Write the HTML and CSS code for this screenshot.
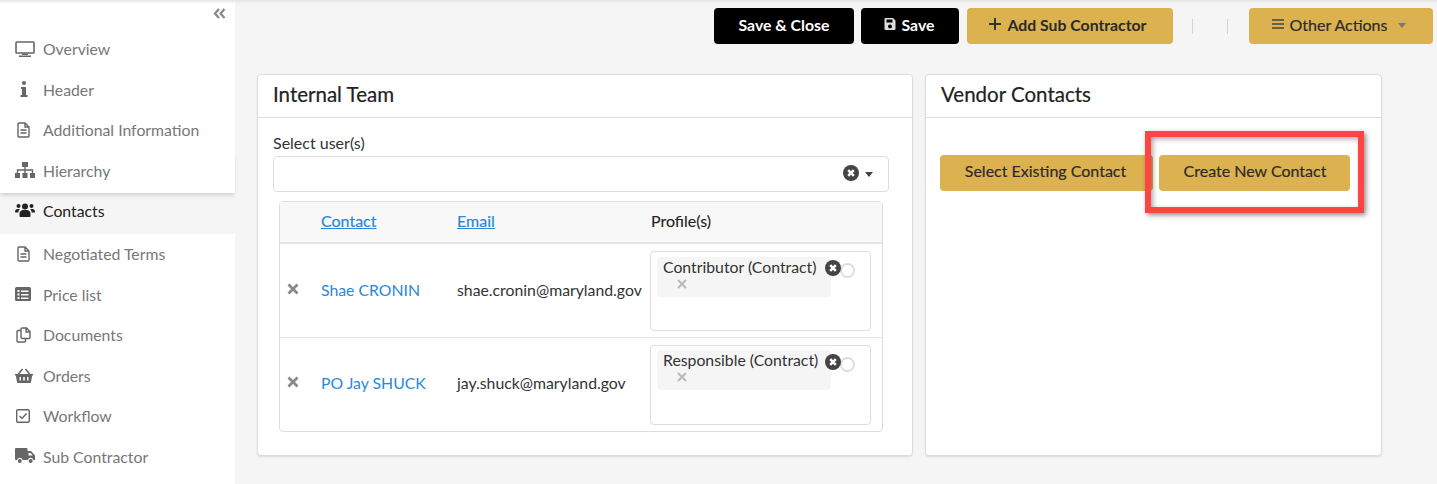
FILE: index.html
```html
<!DOCTYPE html>
<html lang="en">
<head>
<meta charset="utf-8">
<title>Contacts</title>
<link rel="stylesheet" href="styles.css">
</head>
<body>
<div class="page">
  <aside class="sidebar">
    <div class="collapse"><svg width="13" height="11" viewBox="0 0 13 11"><path d="M6 1 2 5.500 6 10M11.500 1 7.500 5.500 11.500 10" fill="none" stroke="#888" stroke-width="2.200"/></svg></div>
    <nav class="nav">
      <a class="item"><span class="ic"><svg width="20" height="16" viewBox="0 0 20 16"><path d="M1.800 1h16.400a.8.800 0 0 1 .8.800v9.400a.8.800 0 0 1-.8.800H1.800a.8.800 0 0 1-.8-.8V1.800a.8.800 0 0 1 .8-.8Z" fill="none" stroke="#666" stroke-width="1.600"/><path d="M7 12.500h6v1.500H7zM4 14.500h12V16H4z" fill="#666"/></svg></span>Overview</a>
      <a class="item"><span class="ic"><svg width="8" height="16" viewBox="0 0 8 16"><circle cx="4" cy="2" r="2" fill="#666"/><path d="M1 6h5v8h1.500v2H.5v-2H2V8H1z" fill="#666"/></svg></span>Header</a>
      <a class="item"><span class="ic"><svg width="13" height="16" viewBox="0 0 13 16"><path d="M2 1h6l4 4v9a1 1 0 0 1-1 1H2a1 1 0 0 1-1-1V2a1 1 0 0 1 1-1ZM8 1v4h4M3.500 8h6M3.500 11h6" fill="none" stroke="#666" stroke-width="1.400"/></svg></span>Additional Information</a>
      <a class="item"><span class="ic"><svg width="20" height="16" viewBox="0 0 20 16"><path d="M7 0h6v5H7zM0 11h5v5H0zM7.500 11h5v5h-5zM15 11h5v5h-5z" fill="#666"/><path d="M10 5v6M2.500 11V8h15v3" fill="none" stroke="#666" stroke-width="1.400"/></svg></span>Hierarchy</a>
      <a class="item active"><span class="ic"><svg width="20" height="14" viewBox="0 0 20 14"><circle cx="10" cy="3.500" r="3" fill="#222"/><circle cx="3.500" cy="3" r="2" fill="#222"/><circle cx="16.500" cy="3" r="2" fill="#222"/><path d="M4.500 13v-2.500C4.500 8.500 6.500 7 8 7h4c1.500 0 3.500 1.500 3.500 3.500V13a1 1 0 0 1-1 1h-9a1 1 0 0 1-1-1ZM0 9c0-2 1-3 2.500-3H5C4 7 3.500 8 3.300 9.500H1a1 1 0 0 1-1-.5ZM20 9c0-2-1-3-2.500-3H15c1 1 1.500 2 1.700 3.500H19a1 1 0 0 0 1-.5Z" fill="#222"/></svg></span>Contacts</a>
      <a class="item"><span class="ic"><svg width="13" height="16" viewBox="0 0 13 16"><path d="M2 1h6l4 4v9a1 1 0 0 1-1 1H2a1 1 0 0 1-1-1V2a1 1 0 0 1 1-1ZM8 1v4h4M3.500 8h6M3.500 11h6" fill="none" stroke="#666" stroke-width="1.400"/></svg></span>Negotiated Terms</a>
      <a class="item"><span class="ic"><svg width="16" height="14" viewBox="0 0 16 14"><path fill-rule="evenodd" d="M1.500 0h13A1.500 1.500 0 0 1 16 1.500v11a1.500 1.500 0 0 1-1.500 1.500h-13A1.500 1.500 0 0 1 0 12.500v-11A1.500 1.500 0 0 1 1.500 0ZM2.500 3v2h2V3Zm0 3.500v2h2v-2Zm0 3.500v2h2v-2ZM6 3.500v1.500h7.500V3.500Zm0 3.500v1.500h7.500V7Zm0 3.500V12h7.500v-1.500Z" fill="#666"/></svg></span>Price list</a>
      <a class="item"><span class="ic"><svg width="15" height="16" viewBox="0 0 15 16"><path d="M5 3.500H2a1 1 0 0 0-1 1V14a1 1 0 0 0 1 1h6.500a1 1 0 0 0 1-1v-2.500" fill="none" stroke="#666" stroke-width="1.400"/><path d="M6 1h4.500L14 4.500V10.500a1 1 0 0 1-1 1H6a1 1 0 0 1-1-1V2a1 1 0 0 1 1-1ZM10 1v4h4" fill="none" stroke="#666" stroke-width="1.400"/></svg></span>Documents</a>
      <a class="item"><span class="ic"><svg width="18" height="15" viewBox="0 0 18 15"><path fill-rule="evenodd" d="M0 6h18v1.500h-.8L16 14a1 1 0 0 1-1 1H3a1 1 0 0 1-1-1L.8 7.500H0ZM4.500 9v3.500H6V9Zm3.700 0v3.500h1.600V9ZM12 9v3.500h1.500V9Z" fill="#666"/><path d="M3.500 6 7.500 1M14.500 6l-4-5" fill="none" stroke="#666" stroke-width="1.500"/></svg></span>Orders</a>
      <a class="item"><span class="ic"><svg width="14" height="14" viewBox="0 0 14 14"><rect x=".7" y=".7" width="12.600" height="12.600" rx="1.200" fill="none" stroke="#666" stroke-width="1.400"/><path d="m3.500 7 2.500 2.500 4.500-5" fill="none" stroke="#666" stroke-width="1.400"/></svg></span>Workflow</a>
      <a class="item"><span class="ic"><svg width="20" height="16" viewBox="0 0 20 16"><path fill-rule="evenodd" d="M1 0h10.500a1 1 0 0 1 1 1v2H16l4 4.500V12h-1.700a2.700 2.700 0 0 0-5.300 0H7.500a2.700 2.700 0 0 0-5.300 0H1a1 1 0 0 1-1-1V1a1 1 0 0 1 1-1Zm12.500 5v2.500h4.300L15.500 5Z" fill="#666"/><circle cx="4.800" cy="13" r="2" fill="#666"/><circle cx="15.700" cy="13" r="2" fill="#666"/></svg></span>Sub Contractor</a>
    </nav>
  </aside>
  <main class="main">
    <div class="toolbar">
      <button class="btn dark wide">Save &amp; Close</button>
      <button class="btn dark save"><svg width="12" height="12" viewBox="0 0 11 12"><path fill-rule="evenodd" d="M1 0h7.500L11 2.500V11a1 1 0 0 1-1 1H1a1 1 0 0 1-1-1V1a1 1 0 0 1 1-1Zm1 1.500v3h6v-3Zm3.500 5a2 2 0 1 0 0 4 2 2 0 0 0 0-4Z" fill="#ddd"/></svg>Save</button>
      <button class="btn gold add"><svg width="12" height="12" viewBox="0 0 11 11"><path d="M5.500 0v11M0 5.500h11" stroke="#333" stroke-width="1.800"/></svg>Add Sub Contractor</button>
      <span class="sep first"></span>
      <span class="sep second"></span>
      <button class="btn gold other"><svg width="12" height="10" viewBox="0 0 12 10"><path d="M0 1h12M0 5h12M0 9h12" stroke="#444" stroke-width="1.500"/></svg>Other Actions<span class="caret"></span></button>
    </div>
    <div class="cards">
      <section class="card internal">
        <h2 class="card-title">Internal Team</h2>
        <div class="internal-body">
          <label class="field-label">Select user(s)</label>
          <div class="select">
            <svg width="16" height="16" viewBox="0 0 16 16"><circle cx="8" cy="8" r="8" fill="#444"/><path d="m5.200 5.200 5.600 5.600m0-5.600-5.600 5.600" stroke="#fff" stroke-width="2.600"/></svg>
            <span class="caret dark-caret"></span>
          </div>
          <table class="contacts">
            <thead>
              <tr>
                <th class="c-x"></th>
                <th class="c-name"><a class="link">Contact</a></th>
                <th class="c-mail"><a class="link">Email</a></th>
                <th class="c-prof">Profile(s)</th>
              </tr>
            </thead>
            <tbody>
              <tr>
                <td class="rm"><svg width="12" height="12" viewBox="0 0 12 12"><path d="m1.500 1.500 9 9m0-9-9 9" stroke="#888" stroke-width="2.800"/></svg></td>
                <td class="who">Shae CRONIN</td>
                <td class="mail">shae.cronin@maryland.gov</td>
                <td class="prof">
                  <div class="multi">
                    <div class="tag">Contributor (Contract)<svg class="tag-x" width="10" height="10" viewBox="0 0 10 10"><path d="m1 1 8 8m0-8-8 8" stroke="#bbb" stroke-width="2.200"/></svg></div>
                    <svg class="clear" width="16" height="16" viewBox="0 0 16 16"><circle cx="8" cy="8" r="8" fill="#444"/><path d="m5.200 5.200 5.600 5.600m0-5.600-5.600 5.600" stroke="#fff" stroke-width="2.600"/></svg>
                    <span class="radio"></span>
                  </div>
                </td>
              </tr>
              <tr>
                <td class="rm"><svg width="12" height="12" viewBox="0 0 12 12"><path d="m1.500 1.500 9 9m0-9-9 9" stroke="#888" stroke-width="2.800"/></svg></td>
                <td class="who">PO Jay SHUCK</td>
                <td class="mail">jay.shuck@maryland.gov</td>
                <td class="prof">
                  <div class="multi">
                    <div class="tag">Responsible (Contract)<svg class="tag-x" width="10" height="10" viewBox="0 0 10 10"><path d="m1 1 8 8m0-8-8 8" stroke="#bbb" stroke-width="2.200"/></svg></div>
                    <svg class="clear" width="16" height="16" viewBox="0 0 16 16"><circle cx="8" cy="8" r="8" fill="#444"/><path d="m5.200 5.200 5.600 5.600m0-5.600-5.600 5.600" stroke="#fff" stroke-width="2.600"/></svg>
                    <span class="radio"></span>
                  </div>
                </td>
              </tr>
            </tbody>
          </table>
        </div>
      </section>
      <section class="card vendor">
        <h2 class="card-title">Vendor Contacts</h2>
        <div class="vendor-body">
          <button class="btn gold v-select">Select Existing Contact</button>
          <button class="btn gold v-create">Create New Contact</button>
          <span class="highlight"></span>
        </div>
      </section>
    </div>
  </main>
</div>
</body>
</html>
```

FILE: styles.css
```css
* { box-sizing: border-box; }
html, body { margin: 0; height: 100%; }
body {
  background: #f5f5f5;
  font-family: Lato, "Open Sans", sans-serif;
  font-size: 15.800px;
  color: #333;
  overflow: hidden;
}
.page {
  display: flex;
  height: 484px;
  position: relative;
}
.page::before {
  content: "";
  position: absolute;
  left: 0;
  right: 0;
  top: 0;
  height: 4px;
  background: linear-gradient(#e6e6e6, rgba(230, 230, 230, 0));
  z-index: 3;
}
.sidebar {
  width: 235px;
  flex: none;
  background: #fff;
  padding-top: 29px;
  position: relative;
}
.collapse {
  position: absolute;
  right: 9px;
  top: 8px;
  line-height: 0;
}
.nav { display: flex; flex-direction: column; }
.item {
  display: flex;
  align-items: center;
  height: 40.500px;
  padding-bottom: 1px;
  color: #777;
  background: #fff;
}
.ic {
  width: 43px;
  padding-left: 15px;
  flex: none;
  display: flex;
  justify-content: flex-start;
}
.item:nth-child(2) .ic svg { margin-left: 5px; }
.item:nth-child(3) .ic svg, .item:nth-child(6) .ic svg { margin-left: 2px; }
.item:nth-child(8) .ic svg, .item:nth-child(10) .ic svg { margin-left: 1px; }
.item:nth-child(4) {
  height: 42.500px;
  padding-bottom: 3px;
  position: relative;
  z-index: 1;
  box-shadow: 0 3px 4px -1px rgba(0, 0, 0, .16);
}
.item.active {
  background: #f5f5f5;
  color: #222;
  height: 41px;
  padding-bottom: 7px;
}
.main { flex: 1; min-width: 0; }
.toolbar {
  display: flex;
  align-items: center;
  height: 36px;
  margin-top: 8px;
  padding-right: 4px;
  justify-content: flex-end;
}
.btn {
  height: 36px;
  border: 0;
  border-radius: 4px;
  font-family: inherit;
  font-size: 15.800px;
  font-weight: 700;
  display: inline-flex;
  align-items: center;
  justify-content: center;
  gap: 6px;
  padding: 0 0 4px;
}
.dark { background: #000; color: #fff; }
.gold { background: #dcb251; color: #2a2a2a; }
.wide { width: 140px; }
.save { width: 98px; margin-left: 7px; padding-right: 2px; }
.add { width: 206px; margin-left: 8px; padding-right: 4px; }
.sep { width: 1px; height: 15px; background: #d5d5d5; flex: none; }
.first { margin-left: 19px; }
.second { margin-left: 34px; }
.other { width: 184px; margin-left: 21px; padding-right: 4px; font-size: 16px; font-weight: 400; -webkit-text-stroke: .2px #333; }
.caret {
  width: 0;
  height: 0;
  border: 4.500px solid transparent;
  border-top: 5px solid #777;
  border-bottom: 0;
  margin-left: 5px;
  margin-top: 3px;
}
.cards {
  display: flex;
  align-items: stretch;
  gap: 12px;
  margin: 30px 0 0 22px;
}
.card {
  background: #fff;
  border: 1px solid #ddd;
  border-radius: 4px;
  box-shadow: 0 1px 2px rgba(0, 0, 0, .1);
  height: 382px;
}
.internal { width: 656px; }
.vendor { width: 457px; }
.card-title {
  margin: 0;
  height: 43px;
  line-height: 39px;
  padding-left: 15px;
  border-bottom: 1px solid #ddd;
  font-size: 20.500px;
  font-weight: 400;
  color: #222;
  -webkit-text-stroke: .2px #222;
}
.internal-body { padding: 13px 23px 0 15px; }
.field-label { display: block; font-size: 16px; line-height: 24px; color: #333; }
.select {
  height: 36px;
  margin-top: 1px;
  border: 1px solid #ddd;
  border-radius: 4px;
  display: flex;
  align-items: center;
  justify-content: flex-end;
  padding: 0 15px 3px 0;
  gap: 6px;
}
.dark-caret { border-top-color: #444; margin-left: 0; }
.contacts {
  width: 604px;
  margin: 9px 0 0 6px;
  border-collapse: separate;
  border-spacing: 0;
  border: 1px solid #ddd;
  border-radius: 4px;
  table-layout: fixed;
}
.contacts th {
  height: 42px;
  background: #f8f8f8;
  border-bottom: 2px solid #e5e5e5;
  font-size: 16px;
  font-weight: 400;
  text-align: left;
  padding: 0 0 4px;
  color: #222;
  -webkit-text-stroke: .1px #222;
}
.contacts td { padding: 0 0 5px; height: 93px; vertical-align: middle; }
.contacts tbody tr:first-child td { height: 94px; padding-bottom: 3px; border-bottom: 1px solid #e5e5e5; }
.c-x { width: 41px; }
.c-name { width: 136px; }
.c-mail { width: 194px; }
.link { color: #2b88d8; text-decoration: underline; -webkit-text-stroke: .2px #2b88d8; }
.rm { padding-left: 7px !important; line-height: 0; }
.who { color: #2b88d8; }
.contacts tbody tr td.prof { padding: 7px 0 0; vertical-align: top; }
.multi {
  position: relative;
  width: 221px;
  height: 80px;
  margin-left: -1px;
  border: 1px solid #ddd;
  border-radius: 4px;
  padding: 5px 0 0 6px;
}
.tag {
  width: 174px;
  height: 40px;
  background: #f5f5f5;
  border-radius: 4px;
  padding-left: 6px;
  line-height: 20px;
}
.contacts tbody tr:last-child .tag { margin-top: -1px; }
.tag-x { display: block; margin: 2px 0 0 14px; }
.clear { position: absolute; left: 174px; top: 8px; z-index: 1; }
.radio {
  position: absolute;
  left: 189px;
  top: 11px;
  width: 15px;
  height: 15px;
  border: 2px solid #ddd;
  border-radius: 50%;
  background: #fff;
}
.vendor-body {
  position: relative;
  padding: 37px 0 0 14px;
  display: flex;
}
.v-select { width: 213px; padding: 0 2px 5px 0; font-size: 16px; font-weight: 400; -webkit-text-stroke: .2px #333; }
.v-create { width: 191px; margin-left: 6px; padding: 0 0 5px 1px; font-size: 16px; font-weight: 400; -webkit-text-stroke: .2px #333; position: relative; }
.highlight {
  position: absolute;
  left: 219px;
  top: 13px;
  width: 219px;
  height: 82px;
  border: 6px solid #ff4444;
  box-shadow: 2px 2px 5px rgba(0, 0, 0, .45), inset 2px 2px 5px rgba(0, 0, 0, .35);
}
```
